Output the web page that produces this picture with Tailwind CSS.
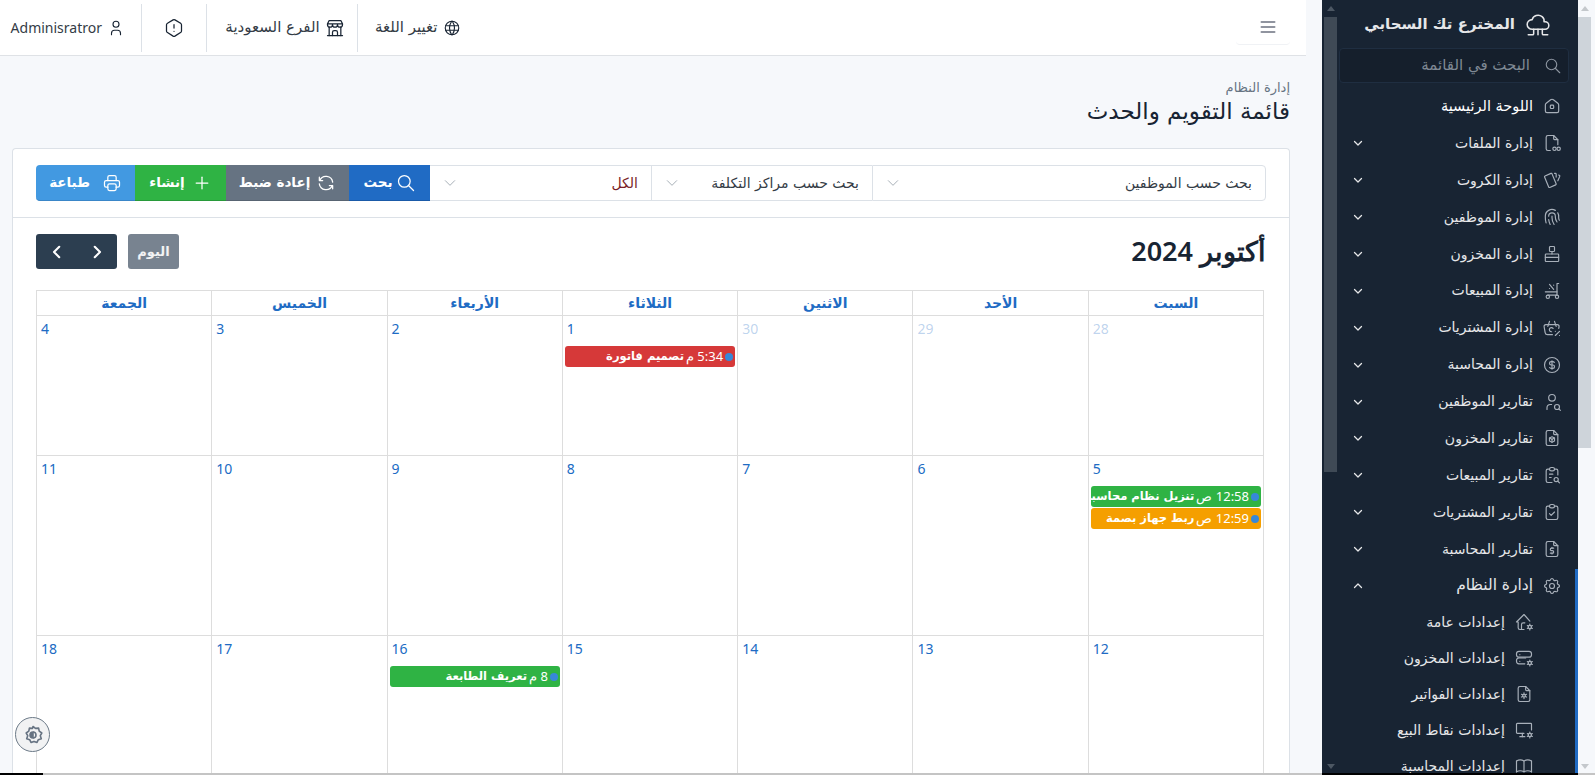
<!DOCTYPE html>
<html lang="ar" dir="rtl">
    <head>
        <meta charset="UTF-8">
        <title>قائمة التقويم والحدث</title>
        <script src="https://cdn.jsdelivr.net/npm/@tailwindcss/browser@4"></script>
    </head>
    <body class="relative h-[775px] w-[1595px] overflow-hidden bg-[#f6f8fb] font-['DejaVu_Sans',sans-serif] text-[#182433]">
        <div class="flex h-full">
            <!-- Page scrollbar -->
            <div class="relative w-[17px] shrink-0">
                <div class="absolute top-[17px] left-0 h-[431px] w-[13px] bg-[#ced4da]"></div>
                <div class="absolute top-[6px] left-[3px] h-0 w-0 border-x-[4px] border-b-[5px] border-x-transparent border-b-[#c4c8cc]"></div>
                <div class="absolute bottom-[6px] left-[3px] h-0 w-0 border-x-[4px] border-t-[5px] border-x-transparent border-t-[#c4c8cc]"></div>
            </div>

            <!-- Sidebar -->
            <aside class="relative h-full w-[256px] shrink-0 bg-[#182433] pr-[9px] text-[#e6e7e9]">
                <div class="flex h-[48px] items-center gap-[10px] pr-[18px] pt-[1px]">
                    <svg class="h-[26px] w-[26px]" viewBox="0 0 24 24" fill="none" stroke="#e6e7e9" stroke-width="1.4" stroke-linecap="round" stroke-linejoin="round"><path d="M6.657 16c-2.572 0 -4.657 -2.007 -4.657 -4.483c0 -2.475 2.085 -4.482 4.657 -4.482c.393 -1.762 1.794 -3.2 3.675 -3.773c1.88 -.572 3.956 -.193 5.444 1c1.488 1.19 2.162 3.007 1.77 4.769h.99c1.913 0 3.464 1.56 3.464 3.486c0 1.927 -1.551 3.487 -3.465 3.487h-11.878"/><path d="M12 16v5"/><path d="M16 16v4a1 1 0 0 0 1 1h4"/><path d="M8 16v4a1 1 0 0 1 -1 1h-4"/></svg>
                    <span class="text-[15px] font-bold">المخترع تك السحابي</span>
                </div>
                <div class="flex h-[35px] w-[230px] items-center gap-[14px] rounded border border-[#1f2e41] bg-[#151f2c] pr-[6px]">
                    <svg class="h-[18px] w-[18px]" viewBox="0 0 24 24" fill="none" stroke="#8d95a0" stroke-width="1.5" stroke-linecap="round" stroke-linejoin="round"><path d="M10 10m-7 0a7 7 0 1 0 14 0a7 7 0 1 0 -14 0"/><path d="M21 21l-6 -6"/></svg>
                    <span class="text-[15px] text-[#7f8994]">البحث في القائمة</span>
                </div>

                <nav class="mt-[5px] text-[14px]">
                    <a class="flex h-[36.9px] items-center gap-[9px] pr-[7px]">
                        <svg class="h-[20px] w-[20px] shrink-0" viewBox="0 0 24 24" fill="none" stroke="#a8b0ba" stroke-width="1.4" stroke-linecap="round" stroke-linejoin="round"><path d="M19 8.71l-5.333 -4.148a2.666 2.666 0 0 0 -3.274 0l-5.334 4.148a2.665 2.665 0 0 0 -1.029 2.105v7.2a2 2 0 0 0 2 2h12a2 2 0 0 0 2 -2v-7.2c0 -.823 -.38 -1.6 -1.03 -2.105"/><rect x="10" y="11" width="4" height="4" rx="1"/></svg>
                        <span class="text-[14.5px] text-white">اللوحة الرئيسية</span>
                    </a>
                    <a class="flex h-[36.9px] items-center gap-[9px] pr-[7px]">
                        <svg class="h-[20px] w-[20px] shrink-0" viewBox="0 0 24 24" fill="none" stroke="#a8b0ba" stroke-width="1.4" stroke-linecap="round" stroke-linejoin="round"><path d="M14 3v4a1 1 0 0 0 1 1h4"/><path d="M10 21h-3a2 2 0 0 1 -2 -2v-14a2 2 0 0 1 2 -2h7l5 5v6"/><circle cx="15" cy="19" r="2"/><circle cx="20" cy="19" r="2"/></svg>
                        <span class="flex-1">إدارة الملفات</span>
                        <svg class="ml-[30px] h-[12px] w-[12px] shrink-0" viewBox="0 0 24 24" fill="none" stroke="#e6e7e9" stroke-width="2.5" stroke-linecap="round" stroke-linejoin="round"><path d="M5 9l7 7l7 -7"/></svg>
                    </a>
                    <a class="flex h-[36.9px] items-center gap-[9px] pr-[7px]">
                        <svg class="h-[20px] w-[20px] shrink-0" viewBox="0 0 24 24" fill="none" stroke="#a8b0ba" stroke-width="1.4" stroke-linecap="round" stroke-linejoin="round"><path d="M3.604 7.197l7.138 -3.109a.96 .96 0 0 1 1.27 .527l4.924 11.902a1 1 0 0 1 -.514 1.304l-7.137 3.109a.96 .96 0 0 1 -1.271 -.527l-4.924 -11.903a1 1 0 0 1 .514 -1.304z"/><path d="M15 4h1a1 1 0 0 1 1 1v3.5"/><path d="M20 6c.264 .112 .52 .217 .768 .315a1 1 0 0 1 .53 1.311l-2.298 5.374"/></svg>
                        <span class="flex-1">إدارة الكروت</span>
                        <svg class="ml-[30px] h-[12px] w-[12px] shrink-0" viewBox="0 0 24 24" fill="none" stroke="#e6e7e9" stroke-width="2.5" stroke-linecap="round" stroke-linejoin="round"><path d="M5 9l7 7l7 -7"/></svg>
                    </a>
                    <a class="flex h-[36.9px] items-center gap-[9px] pr-[7px]">
                        <svg class="h-[20px] w-[20px] shrink-0" viewBox="0 0 24 24" fill="none" stroke="#a8b0ba" stroke-width="1.4" stroke-linecap="round" stroke-linejoin="round"><path d="M18.9 7a8 8 0 0 1 1.1 5v1a6 6 0 0 0 .8 3"/><path d="M8 11a4 4 0 0 1 8 0v1a10 10 0 0 0 2 6"/><path d="M12 11v2a14 14 0 0 0 2.5 8"/><path d="M8 15a18 18 0 0 0 1.8 6"/><path d="M4.9 19a22 22 0 0 1 -.9 -7v-1a8 8 0 0 1 12 -6.95"/></svg>
                        <span class="flex-1">إدارة الموظفين</span>
                        <svg class="ml-[30px] h-[12px] w-[12px] shrink-0" viewBox="0 0 24 24" fill="none" stroke="#e6e7e9" stroke-width="2.5" stroke-linecap="round" stroke-linejoin="round"><path d="M5 9l7 7l7 -7"/></svg>
                    </a>
                    <a class="flex h-[36.9px] items-center gap-[9px] pr-[7px]">
                        <svg class="h-[20px] w-[20px] shrink-0" viewBox="0 0 24 24" fill="none" stroke="#a8b0ba" stroke-width="1.4" stroke-linecap="round" stroke-linejoin="round"><rect x="9" y="3" width="6" height="6" rx="1"/><path d="M12 9v3"/><path d="M4 13a1 1 0 0 1 1 -1h14a1 1 0 0 1 1 1v7a1 1 0 0 1 -1 1h-14a1 1 0 0 1 -1 -1z"/><path d="M4 16h16"/></svg>
                        <span class="flex-1">إدارة المخزون</span>
                        <svg class="ml-[30px] h-[12px] w-[12px] shrink-0" viewBox="0 0 24 24" fill="none" stroke="#e6e7e9" stroke-width="2.5" stroke-linecap="round" stroke-linejoin="round"><path d="M5 9l7 7l7 -7"/></svg>
                    </a>
                    <a class="flex h-[36.9px] items-center gap-[9px] pr-[7px]">
                        <svg class="h-[20px] w-[20px] shrink-0 -scale-x-100" viewBox="0 0 24 24" fill="none" stroke="#a8b0ba" stroke-width="1.4" stroke-linecap="round" stroke-linejoin="round"><path d="M4 19a2 2 0 1 0 4 0a2 2 0 0 0 -4 0"/><path d="M15 19a2 2 0 1 0 4 0a2 2 0 0 0 -4 0"/><path d="M17 17h-11v-14h-2"/><path d="M6 13h14"/><path d="M10 10l5 -6"/><path d="M10 5v.01"/><path d="M15 9v.01"/></svg>
                        <span class="flex-1">إدارة المبيعات</span>
                        <svg class="ml-[30px] h-[12px] w-[12px] shrink-0" viewBox="0 0 24 24" fill="none" stroke="#e6e7e9" stroke-width="2.5" stroke-linecap="round" stroke-linejoin="round"><path d="M5 9l7 7l7 -7"/></svg>
                    </a>
                    <a class="flex h-[36.9px] items-center gap-[9px] pr-[7px]">
                        <svg class="h-[20px] w-[20px] shrink-0" viewBox="0 0 24 24" fill="none" stroke="#a8b0ba" stroke-width="1.4" stroke-linecap="round" stroke-linejoin="round"><path d="M17 10l-2 -6"/><path d="M7 10l2 -6"/><path d="M12.5 20h-5.756a3 3 0 0 1 -2.965 -2.544l-1.255 -7.152a2 2 0 0 1 1.977 -2.304h13.999a2 2 0 0 1 1.977 2.304l-.394 2.248"/><path d="M13.3 12.5a2.5 2.5 0 1 0 -1.8 4"/><path d="M16 21l5 -5"/><path d="M21 21v.01"/><path d="M16 16v.01"/></svg>
                        <span class="flex-1">إدارة المشتريات</span>
                        <svg class="ml-[30px] h-[12px] w-[12px] shrink-0" viewBox="0 0 24 24" fill="none" stroke="#e6e7e9" stroke-width="2.5" stroke-linecap="round" stroke-linejoin="round"><path d="M5 9l7 7l7 -7"/></svg>
                    </a>
                    <a class="flex h-[36.9px] items-center gap-[9px] pr-[7px]">
                        <svg class="h-[20px] w-[20px] shrink-0" viewBox="0 0 24 24" fill="none" stroke="#a8b0ba" stroke-width="1.4" stroke-linecap="round" stroke-linejoin="round"><circle cx="12" cy="12" r="9"/><path d="M14.8 9a2 2 0 0 0 -1.8 -1h-2a2 2 0 1 0 0 4h2a2 2 0 1 1 0 4h-2a2 2 0 0 1 -1.8 -1"/><path d="M12 7v10"/></svg>
                        <span class="flex-1">إدارة المحاسبة</span>
                        <svg class="ml-[30px] h-[12px] w-[12px] shrink-0" viewBox="0 0 24 24" fill="none" stroke="#e6e7e9" stroke-width="2.5" stroke-linecap="round" stroke-linejoin="round"><path d="M5 9l7 7l7 -7"/></svg>
                    </a>
                    <a class="flex h-[36.9px] items-center gap-[9px] pr-[7px]">
                        <svg class="h-[20px] w-[20px] shrink-0" viewBox="0 0 24 24" fill="none" stroke="#a8b0ba" stroke-width="1.4" stroke-linecap="round" stroke-linejoin="round"><path d="M8 7a4 4 0 1 0 8 0a4 4 0 0 0 -8 0"/><path d="M6 21v-2a4 4 0 0 1 4 -4h1.5"/><circle cx="18" cy="18" r="3"/><path d="M20.2 20.2l1.8 1.8"/></svg>
                        <span class="flex-1">تقارير الموظفين</span>
                        <svg class="ml-[30px] h-[12px] w-[12px] shrink-0" viewBox="0 0 24 24" fill="none" stroke="#e6e7e9" stroke-width="2.5" stroke-linecap="round" stroke-linejoin="round"><path d="M5 9l7 7l7 -7"/></svg>
                    </a>
                    <a class="flex h-[36.9px] items-center gap-[9px] pr-[7px]">
                        <svg class="h-[20px] w-[20px] shrink-0" viewBox="0 0 24 24" fill="none" stroke="#a8b0ba" stroke-width="1.4" stroke-linecap="round" stroke-linejoin="round"><path d="M14 3v4a1 1 0 0 0 1 1h4"/><path d="M17 21h-10a2 2 0 0 1 -2 -2v-14a2 2 0 0 1 2 -2h7l5 5v11a2 2 0 0 1 -2 2z"/><path d="M12 10.5l3 1.5v3.5l-3 1.5l-3 -1.5v-3.5z"/><path d="M9 12l3 1.5l3 -1.5"/><path d="M12 13.5v3.5"/></svg>
                        <span class="flex-1">تقارير المخزون</span>
                        <svg class="ml-[30px] h-[12px] w-[12px] shrink-0" viewBox="0 0 24 24" fill="none" stroke="#e6e7e9" stroke-width="2.5" stroke-linecap="round" stroke-linejoin="round"><path d="M5 9l7 7l7 -7"/></svg>
                    </a>
                    <a class="flex h-[36.9px] items-center gap-[9px] pr-[7px]">
                        <svg class="h-[20px] w-[20px] shrink-0" viewBox="0 0 24 24" fill="none" stroke="#a8b0ba" stroke-width="1.4" stroke-linecap="round" stroke-linejoin="round"><path d="M9 5h-2a2 2 0 0 0 -2 2v12a2 2 0 0 0 2 2h5"/><path d="M19 12v-5a2 2 0 0 0 -2 -2h-2"/><rect x="9" y="3" width="6" height="4" rx="2"/><path d="M9 11h4"/><path d="M9 15h2"/><circle cx="17" cy="17.5" r="2.5"/><path d="M19 19.5l2 2"/></svg>
                        <span class="flex-1">تقارير المبيعات</span>
                        <svg class="ml-[30px] h-[12px] w-[12px] shrink-0" viewBox="0 0 24 24" fill="none" stroke="#e6e7e9" stroke-width="2.5" stroke-linecap="round" stroke-linejoin="round"><path d="M5 9l7 7l7 -7"/></svg>
                    </a>
                    <a class="flex h-[36.9px] items-center gap-[9px] pr-[7px]">
                        <svg class="h-[20px] w-[20px] shrink-0" viewBox="0 0 24 24" fill="none" stroke="#a8b0ba" stroke-width="1.4" stroke-linecap="round" stroke-linejoin="round"><path d="M9 5h-2a2 2 0 0 0 -2 2v12a2 2 0 0 0 2 2h10a2 2 0 0 0 2 -2v-12a2 2 0 0 0 -2 -2h-2"/><path d="M9 5a2 2 0 0 1 2 -2h2a2 2 0 0 1 2 2a2 2 0 0 1 -2 2h-2a2 2 0 0 1 -2 -2"/><path d="M9 14l2 2l4 -4"/></svg>
                        <span class="flex-1">تقارير المشتريات</span>
                        <svg class="ml-[30px] h-[12px] w-[12px] shrink-0" viewBox="0 0 24 24" fill="none" stroke="#e6e7e9" stroke-width="2.5" stroke-linecap="round" stroke-linejoin="round"><path d="M5 9l7 7l7 -7"/></svg>
                    </a>
                    <a class="flex h-[36.9px] items-center gap-[9px] pr-[7px]">
                        <svg class="h-[20px] w-[20px] shrink-0" viewBox="0 0 24 24" fill="none" stroke="#a8b0ba" stroke-width="1.4" stroke-linecap="round" stroke-linejoin="round"><path d="M14 3v4a1 1 0 0 0 1 1h4"/><path d="M17 21h-10a2 2 0 0 1 -2 -2v-14a2 2 0 0 1 2 -2h7l5 5v11a2 2 0 0 1 -2 2z"/><path d="M14 11h-2.5a1.5 1.5 0 0 0 0 3h1a1.5 1.5 0 0 1 0 3h-2.5"/><path d="M12 10v1m0 6v1"/></svg>
                        <span class="flex-1">تقارير المحاسبة</span>
                        <svg class="ml-[30px] h-[12px] w-[12px] shrink-0" viewBox="0 0 24 24" fill="none" stroke="#e6e7e9" stroke-width="2.5" stroke-linecap="round" stroke-linejoin="round"><path d="M5 9l7 7l7 -7"/></svg>
                    </a>
                    <a class="flex h-[36.9px] items-center gap-[9px] pr-[7px]">
                        <svg class="h-[20px] w-[20px] shrink-0" viewBox="0 0 24 24" fill="none" stroke="#a8b0ba" stroke-width="1.4" stroke-linecap="round" stroke-linejoin="round"><path d="M10.325 4.317c.426 -1.756 2.924 -1.756 3.35 0a1.724 1.724 0 0 0 2.573 1.066c1.543 -.94 3.31 .826 2.37 2.37a1.724 1.724 0 0 0 1.065 2.572c1.756 .426 1.756 2.924 0 3.35a1.724 1.724 0 0 0 -1.066 2.573c.94 1.543 -.826 3.31 -2.37 2.37a1.724 1.724 0 0 0 -2.572 1.065c-.426 1.756 -2.924 1.756 -3.35 0a1.724 1.724 0 0 0 -2.573 -1.066c-1.543 .94 -3.31 -.826 -2.37 -2.37a1.724 1.724 0 0 0 -1.065 -2.572c-1.756 -.426 -1.756 -2.924 0 -3.35a1.724 1.724 0 0 0 1.066 -2.573c-.94 -1.543 .826 -3.31 2.37 -2.37c1 .608 2.296 .07 2.572 -1.065z"/><circle cx="12" cy="12" r="3"/></svg>
                        <span class="flex-1 text-[15.5px]">إدارة النظام</span>
                        <svg class="ml-[30px] h-[12px] w-[12px] shrink-0" viewBox="0 0 24 24" fill="none" stroke="#e6e7e9" stroke-width="2.5" stroke-linecap="round" stroke-linejoin="round"><path d="M5 15l7 -7l7 7"/></svg>
                    </a>

                    <!-- Sub menu -->
                    <a class="flex h-[36px] items-center gap-[9px] pr-[35px]">
                        <svg class="h-[20px] w-[20px] shrink-0" viewBox="0 0 24 24" fill="none" stroke="#a8b0ba" stroke-width="1.4" stroke-linecap="round" stroke-linejoin="round"><path d="M9 21v-6a2 2 0 0 1 2 -2h2"/><path d="M19 11l-7 -8l-9 9h2v7a2 2 0 0 0 2 2h5"/><circle cx="19" cy="18" r="2"/><path d="M19 14.5v1.5m0 4v1.5m3 -5.2l-1.3 .7m-3.4 2l-1.3 .7m0 -3.4l1.3 .7m3.4 2l1.3 .7"/></svg>
                        <span>إعدادات عامة</span>
                    </a>
                    <a class="flex h-[36px] items-center gap-[9px] pr-[35px]">
                        <svg class="h-[20px] w-[20px] shrink-0" viewBox="0 0 24 24" fill="none" stroke="#a8b0ba" stroke-width="1.4" stroke-linecap="round" stroke-linejoin="round"><path d="M3 7a3 3 0 0 1 3 -3h12a3 3 0 0 1 3 3v1a3 3 0 0 1 -3 3h-12a3 3 0 0 1 -3 -3z"/><path d="M13 19h-7a3 3 0 0 1 -3 -3v-1a3 3 0 0 1 3 -3h8"/><path d="M7 8v.01"/><path d="M7 16v.01"/><circle cx="19" cy="18" r="2"/><path d="M19 14.5v1.5m0 4v1.5m3 -5.2l-1.3 .7m-3.4 2l-1.3 .7m0 -3.4l1.3 .7m3.4 2l1.3 .7"/></svg>
                        <span>إعدادات المخزون</span>
                    </a>
                    <a class="flex h-[36px] items-center gap-[9px] pr-[35px]">
                        <svg class="h-[20px] w-[20px] shrink-0" viewBox="0 0 24 24" fill="none" stroke="#a8b0ba" stroke-width="1.4" stroke-linecap="round" stroke-linejoin="round"><path d="M14 3v4a1 1 0 0 0 1 1h4"/><path d="M17 21h-10a2 2 0 0 1 -2 -2v-14a2 2 0 0 1 2 -2h7l5 5v11a2 2 0 0 1 -2 2z"/><circle cx="12" cy="14" r="1.6"/><path d="M12 10.5v1.5m0 4v1.5m3 -5.2l-1.3 .7m-3.4 2l-1.3 .7m0 -3.4l1.3 .7m3.4 2l1.3 .7"/></svg>
                        <span>إعدادات الفواتير</span>
                    </a>
                    <a class="flex h-[36px] items-center gap-[9px] pr-[35px]">
                        <svg class="h-[20px] w-[20px] shrink-0" viewBox="0 0 24 24" fill="none" stroke="#a8b0ba" stroke-width="1.4" stroke-linecap="round" stroke-linejoin="round"><path d="M12 16h-8a1 1 0 0 1 -1 -1v-10a1 1 0 0 1 1 -1h16a1 1 0 0 1 1 1v7"/><path d="M7 20h6"/><path d="M10 16v4"/><circle cx="19" cy="18" r="2"/><path d="M19 14.5v1.5m0 4v1.5m3 -5.2l-1.3 .7m-3.4 2l-1.3 .7m0 -3.4l1.3 .7m3.4 2l1.3 .7"/></svg>
                        <span>إعدادات نقاط البيع</span>
                    </a>
                    <a class="flex h-[36px] items-center gap-[9px] pr-[35px]">
                        <svg class="h-[20px] w-[20px] shrink-0" viewBox="0 0 24 24" fill="none" stroke="#a8b0ba" stroke-width="1.4" stroke-linecap="round" stroke-linejoin="round"><path d="M3 19a9 9 0 0 1 9 0a9 9 0 0 1 9 0"/><path d="M3 6a9 9 0 0 1 9 0a9 9 0 0 1 9 0"/><path d="M3 6v13"/><path d="M12 6v13"/><path d="M21 6v13"/></svg>
                        <span>إعدادات المحاسبة</span>
                    </a>
                </nav>

                <!-- Active marker and inner scrollbar -->
                <div class="absolute top-[569px] right-0 bottom-0 w-[3px] bg-[#206bc4]"></div>
                <div class="absolute top-[17px] left-[2px] h-[455px] w-[13px] bg-[#3f4a56]"></div>
                <div class="absolute top-[6px] left-[5px] h-0 w-0 border-x-[4px] border-b-[5px] border-x-transparent border-b-[#4c5763]"></div>
                <div class="absolute bottom-[6px] left-[5px] h-0 w-0 border-x-[4px] border-t-[5px] border-x-transparent border-t-[#4c5763]"></div>
            </aside>

            <div class="w-[16px] shrink-0"></div>

            <!-- Main -->
            <main class="h-full w-[1306px] shrink-0 overflow-hidden">
                <header class="flex h-[56px] items-center border-b border-[#dfe2e6] bg-white">
                    <div class="mr-[16px] flex h-[45px] w-[54px] items-center justify-center self-start rounded-b border-b border-[#f0f2f5] pl-[10px]">
                        <svg class="mt-[10px] h-[20px] w-[20px]" viewBox="0 0 24 24" fill="none" stroke="#6c7280" stroke-width="2" stroke-linecap="round"><path d="M4 6h16"/><path d="M4 12h16"/><path d="M4 18h16"/></svg>
                    </div>
                    <div class="mr-auto flex h-[48px] items-center text-[15px] text-[#343c46]">
                        <div class="flex h-full items-center gap-[5px] pl-[17px]">
                            <svg class="h-[18px] w-[18px]" viewBox="0 0 24 24" fill="none" stroke="#182433" stroke-width="1.5" stroke-linecap="round" stroke-linejoin="round"><circle cx="12" cy="12" r="9"/><path d="M3.6 9h16.8"/><path d="M3.6 15h16.8"/><path d="M11.5 3a17 17 0 0 0 0 18"/><path d="M12.5 3a17 17 0 0 1 0 18"/></svg>
                            <span>تغيير اللغة</span>
                        </div>
                        <div class="flex h-full w-[151px] items-center justify-center gap-[5px] border-r border-[#dce1e7] pl-[6px]">
                            <svg class="h-[20px] w-[20px]" viewBox="0 0 24 24" fill="none" stroke="#182433" stroke-width="1.5" stroke-linecap="round" stroke-linejoin="round"><path d="M3 21h18"/><path d="M3 7v1a3 3 0 0 0 6 0v-1m0 1a3 3 0 0 0 6 0v-1m0 1a3 3 0 0 0 6 0v-1h-18l2 -4h14l2 4"/><path d="M5 21v-10.15"/><path d="M19 21v-10.15"/><path d="M9 21v-4a2 2 0 0 1 2 -2h2a2 2 0 0 1 2 2v4"/></svg>
                            <span>الفرع السعودية</span>
                        </div>
                        <div class="flex h-full w-[65px] items-center justify-center border-r border-[#dce1e7]">
                            <svg class="h-[20px] w-[20px]" viewBox="0 0 24 24" fill="none" stroke="#182433" stroke-width="1.5" stroke-linecap="round" stroke-linejoin="round"><path d="M19.875 6.27c.7 .398 1.13 1.143 1.125 1.948v7.284c0 .809 -.443 1.555 -1.158 1.948l-6.75 4.27a2.269 2.269 0 0 1 -2.184 0l-6.75 -4.27a2.225 2.225 0 0 1 -1.158 -1.948v-7.285c0 -.809 .443 -1.554 1.158 -1.947l6.75 -3.98a2.33 2.33 0 0 1 2.25 0l6.75 3.98h-.033z"/><path d="M12 8v4"/><path d="M12 16h.01"/></svg>
                        </div>
                        <div class="flex h-full w-[142px] items-center gap-[5px] border-r border-[#dce1e7] pr-[16px]">
                            <svg class="h-[18px] w-[18px]" viewBox="0 0 24 24" fill="none" stroke="#182433" stroke-width="1.5" stroke-linecap="round" stroke-linejoin="round"><path d="M8 7a4 4 0 1 0 8 0a4 4 0 0 0 -8 0"/><path d="M6 21v-2a4 4 0 0 1 4 -4h4a4 4 0 0 1 4 4v2"/></svg>
                            <span class="font-['Noto_Sans',sans-serif] text-[14px]">Adminisratror</span>
                        </div>
                    </div>
                </header>

                <div class="pt-[24px] pr-[16px] pl-[12px]">
                    <div class="text-[13px] leading-[15px] text-[#667382]">إدارة النظام</div>
                    <h2 class="mt-[2px] h-[51px] text-[23px] leading-[29px]">قائمة التقويم والحدث</h2>

                    <!-- Card -->
                    <div class="rounded-t border border-b-0 border-[#dce1e7] bg-white">
                        <div class="border-b border-[#dce1e7] px-[23px] pt-[16px] pb-[16px]">
                            <div class="flex h-[36px] text-[14px]">
                                <div class="flex w-[394px] items-center justify-between rounded-r border border-[#dce1e7] pr-[13px] pl-[13px]">
                                    <span class="text-[#343c46]">بحث حسب الموظفين</span>
                                    <svg class="h-[14px] w-[14px]" viewBox="0 0 24 24" fill="none" stroke="#9aa3ad" stroke-width="1.5" stroke-linecap="round" stroke-linejoin="round"><path d="M4 8l8 8l8 -8"/></svg>
                                </div>
                                <div class="flex w-[221px] items-center justify-between border-y border-l border-[#dce1e7] pr-[13px] pl-[13px]">
                                    <span class="text-[#343c46]">بحث حسب مراكز التكلفة</span>
                                    <svg class="h-[14px] w-[14px]" viewBox="0 0 24 24" fill="none" stroke="#9aa3ad" stroke-width="1.5" stroke-linecap="round" stroke-linejoin="round"><path d="M4 8l8 8l8 -8"/></svg>
                                </div>
                                <div class="flex w-[221px] items-center justify-between border-y border-[#dce1e7] pr-[13px] pl-[13px]">
                                    <span class="text-[#7a1f28]">الكل</span>
                                    <svg class="h-[14px] w-[14px]" viewBox="0 0 24 24" fill="none" stroke="#9aa3ad" stroke-width="1.5" stroke-linecap="round" stroke-linejoin="round"><path d="M4 8l8 8l8 -8"/></svg>
                                </div>
                                <button class="flex w-[81px] items-center justify-center gap-[3px] border-b border-[#1a5aa8] bg-[#206bc4] text-[13.5px] font-bold text-white">
                                    <svg class="h-[20px] w-[20px]" viewBox="0 0 24 24" fill="none" stroke="#fff" stroke-width="1.5" stroke-linecap="round" stroke-linejoin="round"><path d="M10 10m-7 0a7 7 0 1 0 14 0a7 7 0 1 0 -14 0"/><path d="M21 21l-6 -6"/></svg>
                                    <span>بحث</span>
                                </button>
                                <button class="flex w-[123px] items-center justify-center gap-[6px] border-b border-[#586472] bg-[#667382] text-[13.5px] font-bold text-white">
                                    <svg class="h-[20px] w-[20px]" viewBox="0 0 24 24" fill="none" stroke="#fff" stroke-width="1.5" stroke-linecap="round" stroke-linejoin="round"><path d="M20 11a8.1 8.1 0 0 0 -15.5 -2m-.5 -4v4h4"/><path d="M4 13a8.1 8.1 0 0 0 15.5 2m.5 4v-4h-4"/></svg>
                                    <span>إعادة ضبط</span>
                                </button>
                                <button class="flex w-[91px] items-center justify-center gap-[7px] border-b border-[#289a3a] bg-[#2fb344] text-[13.5px] font-bold text-white">
                                    <svg class="h-[20px] w-[20px]" viewBox="0 0 24 24" fill="none" stroke="#fff" stroke-width="1.5" stroke-linecap="round"><path d="M12 5v14"/><path d="M5 12h14"/></svg>
                                    <span>إنشاء</span>
                                </button>
                                <button class="flex w-[99px] items-center justify-center gap-[12px] rounded-l border-b border-[#3a86c8] bg-[#4299e1] text-[13.5px] font-bold text-white">
                                    <svg class="h-[20px] w-[20px]" viewBox="0 0 24 24" fill="none" stroke="#fff" stroke-width="1.5" stroke-linecap="round" stroke-linejoin="round"><path d="M17 17h2a2 2 0 0 0 2 -2v-4a2 2 0 0 0 -2 -2h-14a2 2 0 0 0 -2 2v4a2 2 0 0 0 2 2h2"/><path d="M17 9v-4a2 2 0 0 0 -2 -2h-6a2 2 0 0 0 -2 2v4"/><rect x="7" y="13" width="10" height="8" rx="2"/></svg>
                                    <span>طباعة</span>
                                </button>
                            </div>
                        </div>

                        <!-- Calendar -->
                        <div class="px-[23px] pt-[16px]">
                            <div class="flex h-[35px] items-center justify-between">
                                <h2 class="font-['Noto_Sans',sans-serif] text-[27px] font-semibold">أكتوبر 2024</h2>
                                <div class="flex gap-[11px]">
                                    <button class="h-[35px] w-[51px] rounded-[3px] bg-[#788390] text-[13px] font-bold text-white/90">اليوم</button>
                                    <div class="flex h-[35px] w-[81px] items-center rounded-[3px] bg-[#2c3e50]">
                                        <svg class="mr-[11px] h-[18px] w-[18px]" viewBox="0 0 24 24" fill="none" stroke="#fff" stroke-width="2.8" stroke-linecap="round" stroke-linejoin="round"><path d="M9 5l7 7l-7 7"/></svg>
                                        <svg class="mr-[22px] h-[18px] w-[18px]" viewBox="0 0 24 24" fill="none" stroke="#fff" stroke-width="2.8" stroke-linecap="round" stroke-linejoin="round"><path d="M15 5l-7 7l7 7"/></svg>
                                    </div>
                                </div>
                            </div>

                            <div class="mt-[21px] mr-[2px] grid w-[1228px] grid-cols-7 border-t border-r border-[#dddddd] font-['Noto_Sans',sans-serif] text-[14px] text-[#206bc4]">
                                <div class="h-[25px] border-b border-l border-[#dddddd] text-center font-['DejaVu_Sans',sans-serif] leading-[24px] font-bold">السبت</div>
                                <div class="h-[25px] border-b border-l border-[#dddddd] text-center font-['DejaVu_Sans',sans-serif] leading-[24px] font-bold">الأحد</div>
                                <div class="h-[25px] border-b border-l border-[#dddddd] text-center font-['DejaVu_Sans',sans-serif] leading-[24px] font-bold">الاثنين</div>
                                <div class="h-[25px] border-b border-l border-[#dddddd] text-center font-['DejaVu_Sans',sans-serif] leading-[24px] font-bold">الثلاثاء</div>
                                <div class="h-[25px] border-b border-l border-[#dddddd] text-center font-['DejaVu_Sans',sans-serif] leading-[24px] font-bold">الأربعاء</div>
                                <div class="h-[25px] border-b border-l border-[#dddddd] text-center font-['DejaVu_Sans',sans-serif] leading-[24px] font-bold">الخميس</div>
                                <div class="h-[25px] border-b border-l border-[#dddddd] text-center font-['DejaVu_Sans',sans-serif] leading-[24px] font-bold">الجمعة</div>

                                <div class="h-[140px] border-b border-l border-[#dddddd] p-[4px] pt-[2px] text-left text-[#206bc4]/30">28</div>
                                <div class="h-[140px] border-b border-l border-[#dddddd] p-[4px] pt-[2px] text-left text-[#206bc4]/30">29</div>
                                <div class="h-[140px] border-b border-l border-[#dddddd] p-[4px] pt-[2px] text-left text-[#206bc4]/30">30</div>
                                <div class="h-[140px] border-b border-l border-[#dddddd] p-[4px] pt-[2px] text-left">
                                    <div>1</div>
                                    <div class="mt-[7px] -mx-[2px] flex h-[21px] items-center gap-[2px] overflow-hidden rounded-[3px] bg-[#d63939] pr-[2px] text-[13px] whitespace-nowrap text-white">
                                        <span class="h-[8px] w-[8px] shrink-0 rounded-full bg-[#3788d8]"></span><span>5:34 م</span><b class="font-['DejaVu_Sans',sans-serif] text-[11.5px]">تصميم فاتورة</b>
                                    </div>
                                </div>
                                <div class="h-[140px] border-b border-l border-[#dddddd] p-[4px] pt-[2px] text-left">2</div>
                                <div class="h-[140px] border-b border-l border-[#dddddd] p-[4px] pt-[2px] text-left">3</div>
                                <div class="h-[140px] border-b border-l border-[#dddddd] p-[4px] pt-[2px] text-left">4</div>

                                <div class="h-[180px] border-b border-l border-[#dddddd] p-[4px] pt-[2px] text-left">
                                    <div>5</div>
                                    <div class="mt-[7px] -mx-[2px] flex h-[21px] items-center gap-[2px] overflow-hidden rounded-[3px] bg-[#2fb344] pr-[2px] text-[13px] whitespace-nowrap text-white">
                                        <span class="h-[8px] w-[8px] shrink-0 rounded-full bg-[#3788d8]"></span><span>12:58 ص</span><b class="font-['DejaVu_Sans',sans-serif] text-[11.5px]">تنزيل نظام محاسبي</b>
                                    </div>
                                    <div class="mt-[1px] -mx-[2px] flex h-[21px] items-center gap-[2px] overflow-hidden rounded-[3px] bg-[#f59f00] pr-[2px] text-[13px] whitespace-nowrap text-white">
                                        <span class="h-[8px] w-[8px] shrink-0 rounded-full bg-[#3788d8]"></span><span>12:59 ص</span><b class="font-['DejaVu_Sans',sans-serif] text-[11.5px]">ربط جهاز بصمة</b>
                                    </div>
                                </div>
                                <div class="h-[180px] border-b border-l border-[#dddddd] p-[4px] pt-[2px] text-left">6</div>
                                <div class="h-[180px] border-b border-l border-[#dddddd] p-[4px] pt-[2px] text-left">7</div>
                                <div class="h-[180px] border-b border-l border-[#dddddd] p-[4px] pt-[2px] text-left">8</div>
                                <div class="h-[180px] border-b border-l border-[#dddddd] p-[4px] pt-[2px] text-left">9</div>
                                <div class="h-[180px] border-b border-l border-[#dddddd] p-[4px] pt-[2px] text-left">10</div>
                                <div class="h-[180px] border-b border-l border-[#dddddd] p-[4px] pt-[2px] text-left">11</div>

                                <div class="h-[180px] border-l border-[#dddddd] p-[4px] pt-[2px] text-left">12</div>
                                <div class="h-[180px] border-l border-[#dddddd] p-[4px] pt-[2px] text-left">13</div>
                                <div class="h-[180px] border-l border-[#dddddd] p-[4px] pt-[2px] text-left">14</div>
                                <div class="h-[180px] border-l border-[#dddddd] p-[4px] pt-[2px] text-left">15</div>
                                <div class="h-[180px] border-l border-[#dddddd] p-[4px] pt-[2px] text-left">
                                    <div>16</div>
                                    <div class="mt-[7px] -mx-[2px] flex h-[21px] items-center gap-[2px] overflow-hidden rounded-[3px] bg-[#2fb344] pr-[2px] text-[13px] whitespace-nowrap text-white">
                                        <span class="h-[8px] w-[8px] shrink-0 rounded-full bg-[#3788d8]"></span><span>8 م</span><b class="font-['DejaVu_Sans',sans-serif] text-[11.5px]">تعريف الطابعة</b>
                                    </div>
                                </div>
                                <div class="h-[180px] border-l border-[#dddddd] p-[4px] pt-[2px] text-left">17</div>
                                <div class="h-[180px] border-l border-[#dddddd] p-[4px] pt-[2px] text-left">18</div>
                            </div>
                        </div>
                    </div>
                </div>
            </main>
        </div>

        <!-- Theme switch -->
        <div class="absolute bottom-[23px] left-[15px] flex h-[35px] w-[35px] items-center justify-center rounded-full border border-[#6c7a88] bg-[#f1f2f3]">
            <svg class="h-[24px] w-[24px]" viewBox="0 0 24 24" fill="none" stroke="#667382" stroke-width="1.6" stroke-linejoin="round"><path d="M12 3.500l2.500 1.900l3.100 -.3l.6 3.100l2.600 1.800l-1.500 2.700l1 3l-3 1l-1.300 2.800l-3 -1.100l-3 1.100l-1.300 -2.800l-3 -1l1 -3l-1.500 -2.700l2.600 -1.800l.6 -3.100l3.100 .3z"/><path d="M12 9a3 3 0 0 0 0 6z" fill="#667382"/><path d="M12 9a3 3 0 0 1 0 6"/></svg>
        </div>

        <!-- Bottom edge of the window -->
        <div class="absolute right-0 bottom-0 left-0 h-[2px] bg-[#c4c4c4]"></div>
        <div class="absolute bottom-0 left-0 h-[2px] w-[43px] bg-black"></div>
        <div class="absolute right-[17px] bottom-0 h-[2px] w-[256px] bg-black"></div>
    </body>
</html>
